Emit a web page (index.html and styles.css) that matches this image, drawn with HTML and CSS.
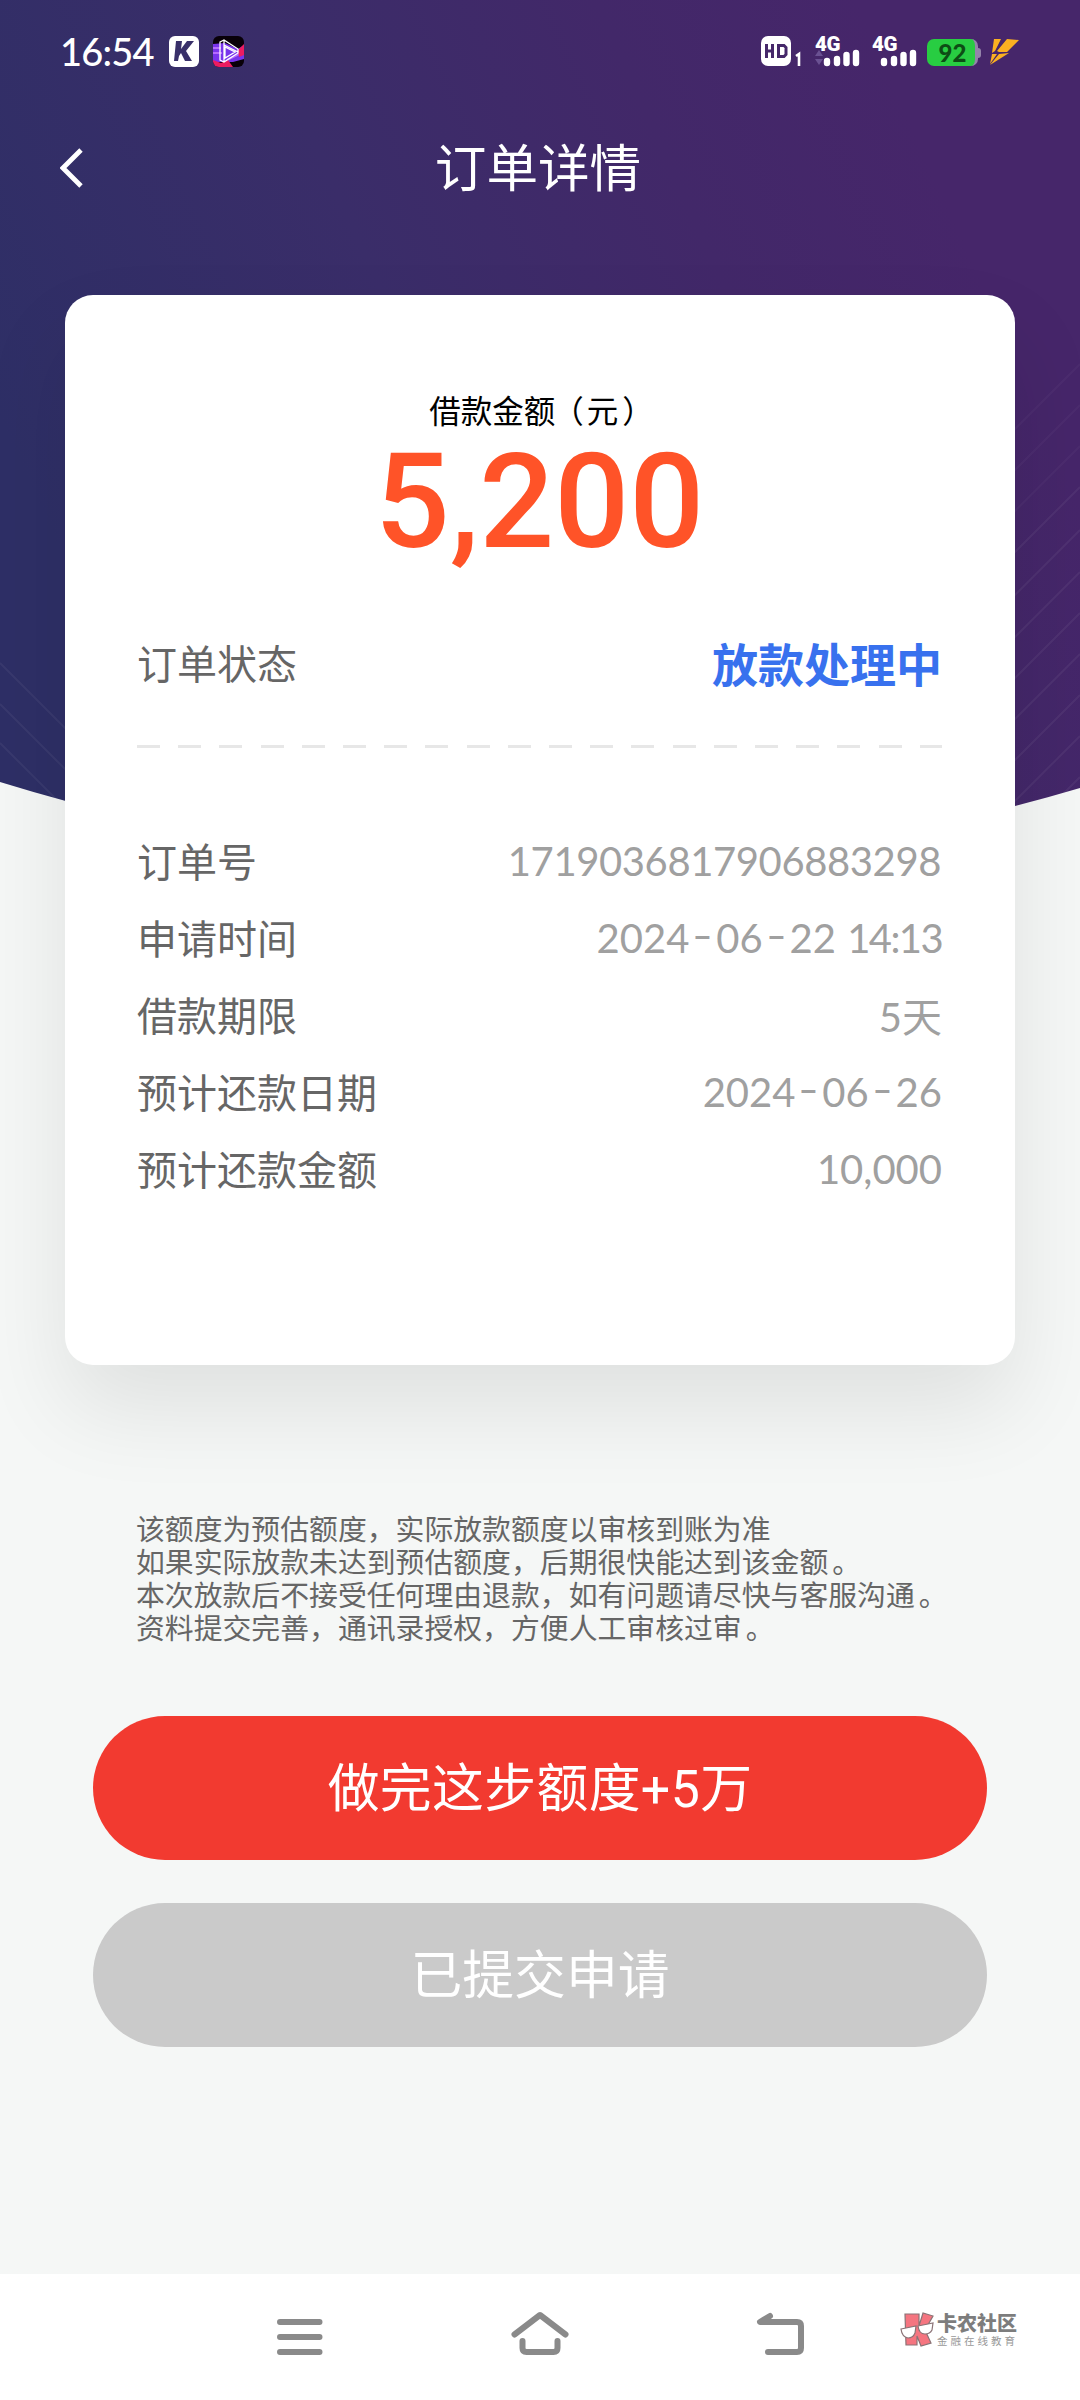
FILE: index.html
```html
<!DOCTYPE html>
<html lang="zh-CN">
<head>
<meta charset="utf-8">
<title>订单详情</title>
<link rel="stylesheet" href="styles.css">
</head>
<body>
<div class="screen">
  <svg class="backdrop" width="1080" height="880" viewBox="0 0 1080 880" aria-hidden="true">
    <defs>
      <linearGradient id="night" gradientUnits="userSpaceOnUse" x1="90" y1="620" x2="960" y2="230">
        <stop offset="0" stop-color="#2e2f66"/>
        <stop offset=".42" stop-color="#3a2d69"/>
        <stop offset=".75" stop-color="#422869"/>
        <stop offset="1" stop-color="#46266a"/>
      </linearGradient>
      <clipPath id="bowl"><path d="M0 0H1080V788Q540 948 0 782Z"/></clipPath>
    </defs>
    <g clip-path="url(#bowl)">
      <rect width="1080" height="880" fill="url(#night)"/>
      <g stroke="#fff" stroke-opacity=".05" stroke-width="2">
        <path d="M0 663L150 813M0 704L150 854M0 743L150 893"/>
        <path stroke-opacity=".03" d="M1080 364L930 514M1080 405L930 555M1080 446L930 596"/>
        <path d="M1080 487L930 637M1080 530L930 680M1080 572L930 722M1080 613L930 763M1080 654L930 804M1080 695L930 845M1080 736L930 886M1080 777L930 927"/>
      </g>
    </g>
  </svg>

  <header class="status">
    <span class="clock">16:54</span>
    <svg class="app-k" width="30" height="31" viewBox="0 0 30 31"><rect width="30" height="31" rx="6" fill="#fff"/><path d="M7 5h6l-1 8 6-8h7l-8 10 6 10h-7l-4-8-2 3-1 5H5z" fill="#382f69"/></svg>
    <svg class="app-play" width="31" height="31" viewBox="0 0 31 31">
      <defs><clipPath id="tile"><rect width="31" height="31" rx="6"/></clipPath></defs>
      <g clip-path="url(#tile)"><rect width="31" height="31" fill="#080009"/><path d="M0 8l12-1 13 6 6-4v14l-11 3H0z" fill="#7834ec"/><path d="M0 12h8M0 17h9M14 24l14-7" stroke="#b56cff" stroke-width="2"/><path d="M25 14l6-6v11l-5 2zM0 24l8 3 7-3 5 7H0z" fill="#ec1c61"/></g>
      <path d="M7 6l4-2 14 9v4L11 26l-4-2zM11 4v22M11 9l14 7M12 11v11l10-6z" fill="none" stroke="#fff" stroke-width="1.300"/>
    </svg>
    <span class="spacer"></span>
    <svg class="hd" width="42" height="32" viewBox="0 0 42 32"><rect width="30" height="30" y="1" rx="7" fill="#fff"/><path d="M5.500 9v14M5.500 16h6M11.500 9v14M17.500 10.500h5.500l2 2v7l-2 2h-5.500z" fill="none" stroke="#46286a" stroke-width="3"/><path d="M35 21l3-2v12" fill="none" stroke="#fff" stroke-width="2.600"/></svg>
    <span class="signal"><b>4G</b>
      <svg width="46" height="18" viewBox="0 0 46 18"><path d="M0 7l4-6 4 6zM0 10h8l-4 6z" fill="#6a5192"/><path d="M12 12v2M22 10v4M31.500 6v8M41 4v10" stroke="#fff" stroke-width="6.400" stroke-linecap="round"/></svg></span>
    <span class="signal second"><b>4G</b>
      <svg width="46" height="18" viewBox="0 0 46 18"><path d="M12 12v2M22 10v4M31.500 6v8M41 4v10" stroke="#fff" stroke-width="6.400" stroke-linecap="round"/></svg></span>
    <span class="battery"><b>92</b></span>
    <svg class="bolt" width="30" height="26" viewBox="0 0 30 26"><path d="M4 0h7L5 12l-3 2zM17 0l12 1-12 12H9l-2-1zM2 15h5l-7 10zM9 15l10-1L0 26z" fill="#fbb021"/></svg>
  </header>

  <nav class="titlebar">
    <svg class="back" width="24" height="40" viewBox="0 0 24 40"><path d="M21 2L3 20l18 18" fill="none" stroke="#fff" stroke-width="4.800"/></svg>
    <h1>订单详情</h1>
  </nav>

  <main>
    <section class="card">
      <p class="caption">借款金额<span class="paren-open">（</span>元<span class="paren-close">）</span></p>
      <p class="amount">5,200</p>
      <div class="row state"><span>订单状态</span><strong>放款处理中</strong></div>
      <div class="dashes"></div>
      <div class="details">
        <div class="row"><span>订单号</span><span class="value order">1719036817906883298</span></div>
        <div class="row"><span>申请时间</span><span class="value">2024<span class="hyphen">-</span>06<span class="hyphen">-</span>22 <span class="time">14:13</span></span></div>
        <div class="row"><span>借款期限</span><span class="value">5天</span></div>
        <div class="row"><span>预计还款日期</span><span class="value">2024<span class="hyphen">-</span>06<span class="hyphen">-</span>26</span></div>
        <div class="row"><span>预计还款金额</span><span class="value">10,000</span></div>
      </div>
    </section>
    <p class="notes">该额度为预估额度，实际放款额度以审核到账为准<br>如果实际放款未达到预估额度，后期很快能达到该金额<span class="stop">。</span><br>本次放款后不接受任何理由退款，如有问题请尽快与客服沟通<span class="stop">。</span><br>资料提交完善，通讯录授权，方便人工审核过审<span class="stop">。</span></p>
    <div class="actions">
      <button class="primary">做完这步额度+5万</button>
      <button class="done">已提交申请</button>
    </div>
  </main>

  <footer class="navbar">
    <svg width="46" height="46" viewBox="0 0 46 46"><path d="M3 12h39.500M3 27h39.500M3 42h39.500"/></svg>
    <svg class="home" width="58" height="46" viewBox="0 0 58 46"><path d="M3.500 24.500L29 5l25.500 19.500M11.500 31v7q0 4 4 4h27q4 0 4-4v-7"/></svg>
    <svg class="return" width="50" height="46" viewBox="0 0 50 46"><path d="M14 6L4 12h37q4 0 4 4v22q0 4-4 4H12"/></svg>
    <div class="brand">
      <svg width="34" height="36" viewBox="0 0 34 36"><g fill="#f57580" stroke="#8b7376" stroke-width="1.200"><path d="M5 2h14v12l4-13 10 3-8 14 6 13-10 3-4-10v9H6z"/><path d="M1 17l15-3-1 7q-2 5-7 5-6-1-7-9zM18 14l15-3-1 7q-2 4-7 4-6 0-7-8z" fill="#fff"/></g></svg>
      <span class="brand-text"><b>卡农社区</b><i>金融在线教育</i></span>
    </div>
  </footer>
</div>
</body>
</html>
```
FILE: styles.css
```css
* { box-sizing: border-box; }
body { margin: 0; font-family: Roboto, "Noto Sans CJK SC", sans-serif; }
h1, p { margin: 0; font-weight: 400; }
.screen { position: relative; width: 1080px; height: 2400px; background: #f5f7f6; display: flex; flex-direction: column; overflow: hidden; }
.backdrop { position: absolute; left: 0; top: 0; }
.status, .titlebar, main, .navbar { position: relative; }
.status { height: 104px; padding: 35px 60px 0 60px; display: flex; align-items: flex-start; color: #fff; }
.clock { width: 92px; font: 500 38px/32px Lato, sans-serif; letter-spacing: -.8px; white-space: nowrap; }
.app-k { margin: 1px 0 0 17px; }
.app-play { margin: 1px 0 0 14px; }
.spacer { flex: 1; }
.hd { margin-right: 12px; }
.signal { width: 46px; height: 32px; display: flex; flex-direction: column; justify-content: space-between; }
.signal b { height: 14px; font: 900 20.500px/18px Roboto, sans-serif; letter-spacing: -.5px; }
.signal svg { display: block; }
.second { margin-left: 11px; }
.battery { position: relative; width: 51px; height: 27px; margin: 4px 12px 0 9px; border-radius: 7px; border-right: 3px solid #9484aa; background: #28cd42; color: #0d4d15; text-align: center; }
.battery::after { content: ""; position: absolute; right: -6px; top: 9px; width: 3px; height: 10px; border-radius: 0 3px 3px 0; background: #9484aa; }
.battery b { display: block; padding-left: 3px; font: 900 24px/28px Lato, sans-serif; }
.bolt { margin-top: 4px; }
.titlebar { height: 191px; display: grid; grid-template-columns: 120px 1fr 120px; padding-top: 31px; }
.back { margin: 13px 0 0 60px; }
h1 { color: #fff; text-align: center; font-size: 51.600px; line-height: 70px; padding-right: 4px; }
main { display: flex; flex-direction: column; flex: 1; }
.card { width: 950px; height: 1070px; margin: 0 auto; padding: 94px 73px 0 72px; border-radius: 28px; background: #fff; box-shadow: 0 44px 90px rgba(0, 0, 0, .09); }
.caption { text-align: center; color: #000; font-size: 31.500px; line-height: 48px; }
.paren-open { margin: 0 3px 0 -3px; }
.paren-close { margin-left: 4px; margin-right: -4px; }
.amount { height: 130px; text-align: center; color: #ff5328; font: 500 132px/130px Roboto, sans-serif; }
.row { display: flex; justify-content: space-between; align-items: center; color: #666; font-size: 40px; }
.state { height: 60px; margin-top: 65px; }
.state strong { color: #3871ee; font-size: 46px; font-weight: 700; }
.dashes { height: 3px; margin-top: 53px; background: repeating-linear-gradient(90deg, #e7e7e7 0 23px, transparent 23px 41.200px); }
.details { margin-top: 73px; }
.details .row { height: 77px; }
.value { padding-top: 3px; color: #a0a0a0; font-family: Lato, "Noto Sans CJK SC", sans-serif; white-space: nowrap; }
.order { letter-spacing: -.4px; margin-right: 1px; }
.hyphen { display: inline-block; padding: 0 6px; transform: translateY(-3px) scaleX(1.400); }
.time { letter-spacing: -1.600px; margin-left: 1px; }
.notes { margin: 149px 0 0 136px; color: #666; font-size: 28.850px; line-height: 33px; white-space: nowrap; }
.stop { margin-left: 4px; }
.actions { margin: 70px 93px 0; display: grid; gap: 43px; }
.actions button { height: 144px; border: 0; border-radius: 72px; color: #fff; padding: 3px 0 0; font: 400 51.800px/141px Roboto, "Noto Sans CJK SC", sans-serif; }
.actions .primary { background: #f23a30; letter-spacing: .4px; }
.done { background: #cacaca; }
.navbar { height: 126px; background: #fff; display: flex; align-items: flex-start; padding: 36px 61px 0 277px; }
.navbar > svg { fill: none; stroke: #8a8a8a; stroke-width: 6; stroke-linecap: round; stroke-linejoin: round; }
.home { margin-left: 188px; }
.return { margin-left: 187px; }
.brand { display: flex; margin: 2px 0 0 94px; gap: 3px; }
.brand-text { display: flex; flex-direction: column; color: #7d7d7d; white-space: nowrap; }
.brand-text b { font: 900 20px/22px "Noto Sans CJK SC", sans-serif; }
.brand-text i { font: normal 10.500px/13px "Noto Sans CJK SC", sans-serif; letter-spacing: 3px; color: #999; }
```
